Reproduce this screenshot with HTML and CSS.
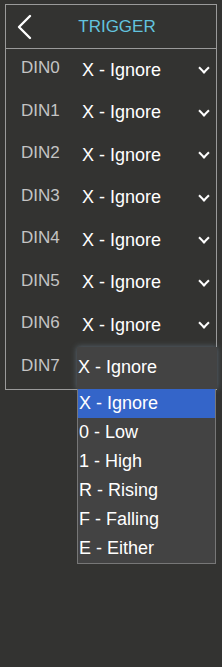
FILE: index.html
```html
<!DOCTYPE html>
<html lang="en">
<head>
    <meta charset="UTF-8">
    <meta name="viewport" content="width=device-width, initial-scale=1.0">
    <title>Trigger</title>
    <link rel="stylesheet" href="styles.css">
</head>
<body>
    <div class="panel">
        <div class="header">
            <svg class="back" width="16" height="26" viewBox="0 0 16 26">
                <polyline points="13,2 2,13 13,24" fill="none" stroke="#fff" stroke-width="2.4" stroke-linecap="round" stroke-linejoin="round"/>
            </svg>
            <h1>TRIGGER</h1>
        </div>

        <div class="row">
            <span class="label">DIN0</span>
            <div class="select"><span>X - Ignore</span><i class="caret"></i></div>
        </div>
        <div class="row">
            <span class="label">DIN1</span>
            <div class="select"><span>X - Ignore</span><i class="caret"></i></div>
        </div>
        <div class="row">
            <span class="label">DIN2</span>
            <div class="select"><span>X - Ignore</span><i class="caret"></i></div>
        </div>
        <div class="row">
            <span class="label">DIN3</span>
            <div class="select"><span>X - Ignore</span><i class="caret"></i></div>
        </div>
        <div class="row">
            <span class="label">DIN4</span>
            <div class="select"><span>X - Ignore</span><i class="caret"></i></div>
        </div>
        <div class="row">
            <span class="label">DIN5</span>
            <div class="select"><span>X - Ignore</span><i class="caret"></i></div>
        </div>
        <div class="row">
            <span class="label">DIN6</span>
            <div class="select"><span>X - Ignore</span><i class="caret"></i></div>
        </div>
        <div class="row">
            <span class="label">DIN7</span>
            <div class="select open">
                <span>X - Ignore</span>
                <ul class="options">
                    <li class="active">X - Ignore</li>
                    <li>0 - Low</li>
                    <li>1 - High</li>
                    <li>R - Rising</li>
                    <li>F - Falling</li>
                    <li>E - Either</li>
                </ul>
            </div>
        </div>
    </div>
</body>
</html>
```

FILE: styles.css
```css
* {
    margin: 0;
    padding: 0;
    box-sizing: border-box;
}

body {
    font-family: 'Liberation Sans', Arial, sans-serif;
    background: #333331;
    padding: 4px 0 0 5px;
    min-height: 100vh;
}

.panel {
    width: 212px;
    border: 1px solid #9a9a9a;
}

.header {
    height: 44px;
    border-bottom: 1px solid #9a9a9a;
    display: flex;
    align-items: center;
    position: relative;
}

.back {
    margin-left: 11px;
}

.header h1 {
    position: absolute;
    left: 0;
    right: 0;
    text-align: center;
    font-size: 17px;
    font-weight: normal;
    color: #62c3df;
    padding-left: 12px;
}

.row {
    height: 42.5px;
    display: flex;
    align-items: center;
}

.label {
    width: 71px;
    padding-left: 15px;
    font-size: 17px;
    color: #c4c4c4;
    margin-top: -4px;
}

.select {
    flex: 1;
    display: flex;
    align-items: center;
    justify-content: space-between;
    padding: 0 8px 0 5px;
    font-size: 18px;
    color: #fff;
    height: 100%;
}

.caret {
    width: 8px;
    height: 8px;
    border-right: 2px solid #fff;
    border-bottom: 2px solid #fff;
    transform: rotate(45deg);
    margin-top: -4px;
}

.select.open {
    position: relative;
    background: #434343;
    padding-left: 1px;
    margin-right: -1px;
    box-shadow: 0 0 6px rgba(140, 170, 200, 0.45);
}

.options {
    list-style: none;
    position: absolute;
    top: 100%;
    left: 0;
    width: 139px;
    background: #434343;
    border: 1px solid #777;
    border-top: none;
}

.options li {
    height: 29px;
    line-height: 29px;
    font-size: 18px;
    color: #fff;
    padding-left: 1px;
}

.options li.active {
    background: #3465c9;
}
```
